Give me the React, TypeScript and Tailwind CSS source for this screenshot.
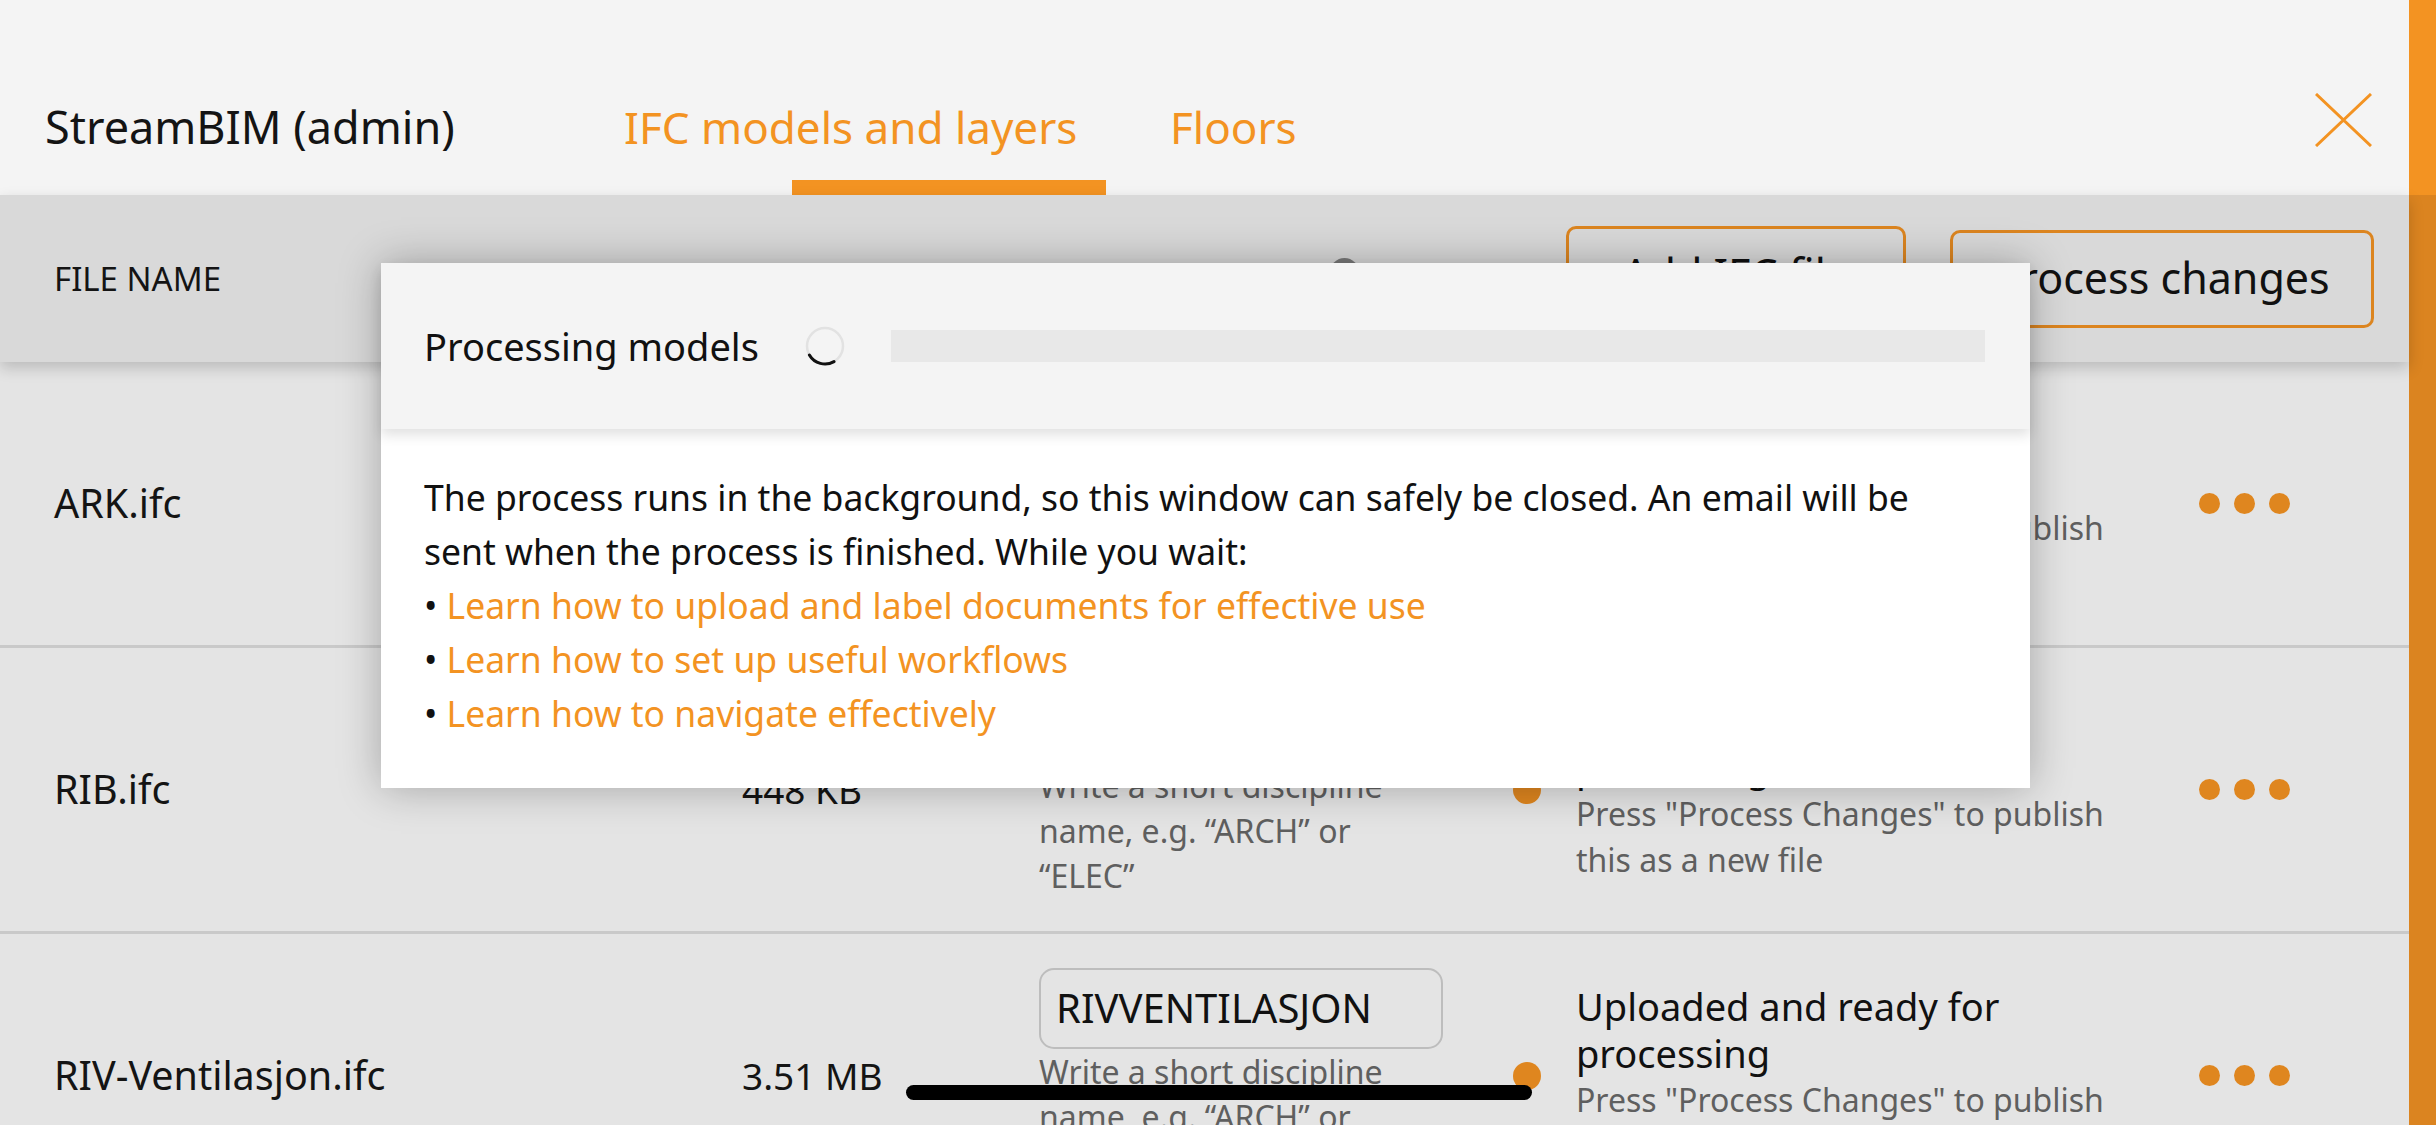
import React from "react";

const Dots = () => (
  <div className="flex items-center gap-[14px]">
    <span className="w-[21px] h-[21px] rounded-full bg-[#df861f]" />
    <span className="w-[21px] h-[21px] rounded-full bg-[#df861f]" />
    <span className="w-[21px] h-[21px] rounded-full bg-[#df861f]" />
  </div>
);

type RowProps = {
  name: string;
  size: string;
  discipline: string;
};

const Row = ({ name, size, discipline }: RowProps) => (
  <div className="flex items-center h-[286px] border-b-[3px] border-[#c9c9c9] pl-[54px] bg-[#e4e4e4] shrink-0">
    <div className="w-[688px] text-[39.5px] text-[#141414]">{name}</div>
    <div className="w-[297px] text-[37px] text-[#141414]">{size}</div>
    <div className="w-[474px] flex flex-col">
      <div className="w-[404px] h-[81px] border-2 border-[#bdbdbd] rounded-[15px] flex items-center px-[15px] text-[40px] text-[#111]">
        {discipline}
      </div>
      <div className="w-[380px] text-[32px] leading-[45px] text-[#5f5f5f]">
        Write a short discipline name, e.g. “ARCH” or “ELEC”
      </div>
    </div>
    <div className="w-[28px] h-[28px] rounded-full bg-[#df861f] mr-[35px] shrink-0" />
    <div className="w-[623px] flex flex-col">
      <div className="text-[38px] leading-[47px] text-[#111] w-[460px]">Uploaded and ready for processing</div>
      <div className="text-[32px] leading-[46px] text-[#5f5f5f] w-[560px]">
        Press "Process Changes" to publish this as a new file
      </div>
    </div>
    <Dots />
  </div>
);

export default function App() {
  return (
    <div className="relative w-[2436px] h-[1125px] overflow-hidden flex font-['Noto_Sans',sans-serif] bg-[#e4e4e4]">
      <div className="w-[2409px] flex flex-col">
        {/* Header */}
        <div className="relative h-[195px] bg-[#f4f4f4] flex items-start shrink-0">
          <div className="w-[624px] pl-[45px] mt-[97px] leading-[60px] text-[45px] text-[#141414]">StreamBIM (admin)</div>
          <div className="relative w-[546px] self-stretch">
            <div className="mt-[97px] leading-[60px] text-[44px] text-[#f39322]">IFC models and layers</div>
            <div className="absolute bottom-0 left-[168px] w-[314px] h-[15px] bg-[#f39322]" />
          </div>
          <div className="mt-[97px] leading-[60px] text-[44px] text-[#f39322]">Floors</div>
          <div className="ml-auto mt-[93px] mr-[37px]">
            <svg width="57" height="54" viewBox="0 0 57 54">
              <path d="M1 1 L56 53 M56 1 L1 53" stroke="#f39322" strokeWidth="3" fill="none" />
            </svg>
          </div>
        </div>
        {/* Toolbar */}
        <div className="relative z-10 h-[167px] bg-[#d9d9d9] flex items-center pl-[54px] pr-[35px] shrink-0 shadow-[0_6px_14px_rgba(0,0,0,0.18)]">
          <div className="w-[1276px] text-[33px] text-[#141414]">FILE NAME</div>
          <div className="w-[29px] h-[29px] rounded-full bg-[#7a7a7a] -mt-[12px]" />
          <div className="ml-auto flex gap-[44px]">
            <div className="w-[340px] h-[98px] border-[3px] border-[#dc8520] rounded-[10px] flex items-center justify-center text-[43px] text-[#111] -mt-[4px]">
              Add IFC file
            </div>
            <div className="w-[424px] h-[98px] border-[3px] border-[#dc8520] rounded-[10px] flex items-center justify-center text-[43px] text-[#111]">
              Process changes
            </div>
          </div>
        </div>
        {/* Rows */}
        <div className="flex flex-col">
          <Row name="ARK.ifc" size="12.4 MB" discipline="ARK" />
          <Row name="RIB.ifc" size="448 KB" discipline="" />
          <Row name="RIV-Ventilasjon.ifc" size="3.51 MB" discipline="RIVVENTILASJON" />
        </div>
      </div>
      {/* Scrollbar */}
      <div className="w-[27px] flex flex-col">
        <div className="h-[195px] bg-[#f39322]" />
        <div className="flex-1 bg-[#db8420]" />
      </div>

      {/* Modal */}
      <div className="absolute left-[381px] top-[263px] w-[1649px] h-[525px] z-20 flex flex-col bg-white shadow-[0_0_40px_rgba(0,0,0,0.28)]">
        <div className="relative z-10 h-[166px] bg-[#f4f4f4] flex items-center pl-[43px] pr-[45px] shadow-[0_6px_12px_rgba(0,0,0,0.12)]">
          <div className="text-[38px] text-[#111] w-[381px]">Processing models</div>
          <svg width="40" height="40" viewBox="0 0 40 40" className="shrink-0">
            <circle cx="20" cy="20" r="18" stroke="#e2e2e2" strokeWidth="2.5" fill="none" />
            <path d="M29 35.6 A18 18 0 0 1 4.4 29" stroke="#111" strokeWidth="3" fill="none" strokeLinecap="round" />
          </svg>
          <div className="ml-[46px] flex-1 h-[32px] bg-[#e8e8e8]" />
        </div>
        <div className="flex-1 pl-[43px] pt-[41px] text-[35.5px] leading-[54px] text-[#111]">
          <div className="w-[1530px]">
            The process runs in the background, so this window can safely be closed. An email will be sent when the
            process is finished. While you wait:
          </div>
          <div>
            • <span className="text-[#f39322]">Learn how to upload and label documents for effective use</span>
          </div>
          <div>
            • <span className="text-[#f39322]">Learn how to set up useful workflows</span>
          </div>
          <div>
            • <span className="text-[#f39322]">Learn how to navigate effectively</span>
          </div>
        </div>
      </div>

      {/* Home indicator */}
      <div className="absolute left-[906px] top-[1085px] w-[626px] h-[15px] rounded-full bg-black z-30" />
    </div>
  );
}
